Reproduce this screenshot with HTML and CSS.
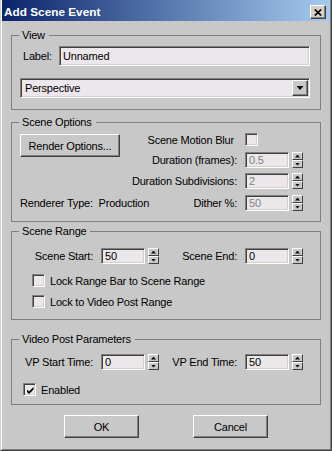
FILE: index.html
```html
<!DOCTYPE html>
<html lang="en">
<head>
  <meta charset="UTF-8">
  <meta name="viewport" content="width=device-width, initial-scale=1.0">
  <title>Add Scene Event</title>
  <link rel="stylesheet" href="styles.css">
</head>
<body>
  <div class="dialog">
    <div class="frame">
      <div class="titlebar">
        <span class="title">Add Scene Event</span>
        <span class="close">
          <svg width="8" height="7" viewBox="0 0 8 7"><path d="M0.8 0.5 L7.2 6.5 M7.2 0.5 L0.8 6.5" stroke="#000" stroke-width="1.7" fill="none"/></svg>
        </span>
      </div>

      <div class="content">
        <div class="group view">
          <span class="legend">View</span>
          <div class="label-row">
            <span>Label:</span>
            <div class="field wide">Unnamed</div>
          </div>
          <div class="field select">
            <span>Perspective</span>
            <span class="drop"></span>
          </div>
        </div>

        <div class="group options">
          <span class="legend">Scene Options</span>
          <div class="opts-left">
            <div class="btn render">Render Options...</div>
            <div class="renderer">Renderer Type:&nbsp; Production</div>
          </div>
          <div class="opts-right">
            <div class="frow first">
              <span class="flabel cb-label">Scene Motion Blur</span>
              <span class="check"></span>
              <span class="pad"></span>
            </div>
            <div class="frow">
              <span class="flabel">Duration (frames):</span>
              <div class="field num off">0.5</div>
              <span class="spin"><span class="up"></span><span class="dn"></span></span>
            </div>
            <div class="frow">
              <span class="flabel">Duration Subdivisions:</span>
              <div class="field num off">2</div>
              <span class="spin"><span class="up"></span><span class="dn"></span></span>
            </div>
            <div class="frow last">
              <span class="flabel">Dither %:</span>
              <div class="field num off">50</div>
              <span class="spin"><span class="up"></span><span class="dn"></span></span>
            </div>
          </div>
        </div>

        <div class="group range">
          <span class="legend">Scene Range</span>
          <div class="pair-row">
            <span class="plabel">Scene Start:</span>
            <div class="field num">50</div>
            <span class="spin"><span class="up"></span><span class="dn"></span></span>
            <span class="plabel second">Scene End:</span>
            <div class="field num">0</div>
            <span class="spin"><span class="up"></span><span class="dn"></span></span>
          </div>
          <div class="cb-row lock1"><span class="check"></span>Lock Range Bar to Scene Range</div>
          <div class="cb-row lock2"><span class="check"></span>Lock to Video Post Range</div>
        </div>

        <div class="group vp">
          <span class="legend">Video Post Parameters</span>
          <div class="pair-row">
            <span class="plabel">VP Start Time:</span>
            <div class="field num">0</div>
            <span class="spin"><span class="up"></span><span class="dn"></span></span>
            <span class="plabel second">VP End Time:</span>
            <div class="field num">50</div>
            <span class="spin"><span class="up"></span><span class="dn"></span></span>
          </div>
          <div class="cb-row enabled">
            <span class="check">
              <svg width="9" height="9" viewBox="0 0 9 9"><path d="M1 3.5 L3 5.5 L7.5 1 L7.5 3.5 L3 8 L1 6 Z" fill="#000"/></svg>
            </span>Enabled
          </div>
        </div>

        <div class="actions">
          <div class="btn action">OK</div>
          <div class="btn action">Cancel</div>
        </div>
      </div>
    </div>
  </div>
</body>
</html>
```

FILE: styles.css
```css
html, body {
  margin: 0;
  padding: 0;
  background: #c8c8c8;
}
body {
  font-family: "Liberation Sans", Arial, sans-serif;
  font-size: 11px;
  letter-spacing: -0.2px;
  color: #000;
}
.dialog {
  width: 332px;
  height: 451px;
  box-sizing: border-box;
  border: 1px solid;
  border-color: #d4d0c8 #404040 #404040 #d4d0c8;
  border-top: 0;
  background: #c8c8c8;
}
.frame {
  height: 100%;
  box-sizing: border-box;
  border: 1px solid;
  border-color: #fff #808080 #808080 #fff;
  border-top: 0;
}
.titlebar {
  height: 21px;
  display: flex;
  justify-content: space-between;
  align-items: flex-start;
  background: linear-gradient(to right, #0a246a, #a6caf0);
}
.title {
  color: #fff;
  font-weight: bold;
  font-size: 11.8px;
  letter-spacing: 0;
  line-height: 13px;
  margin: 6px 0 0 2px;
}
.close {
  width: 16px;
  height: 14px;
  margin: 5px 4px 0 0;
  box-sizing: border-box;
  display: flex;
  align-items: center;
  justify-content: center;
  background: #d4d0c8;
  border: 1px solid;
  border-color: #fff #404040 #404040 #fff;
  box-shadow: inset -1px -1px #808080;
}
.close svg {
  display: block;
  margin-right: 1px;
}

.content {
  display: flex;
  flex-direction: column;
  padding: 14px 9px 0;
}
.group {
  position: relative;
  border: 1px solid #808080;
}
.legend {
  position: absolute;
  top: -7px;
  left: 7px;
  padding: 0 4px 0 3px;
  line-height: 13px;
  background: #c8c8c8;
}

/* sunken edit fields */
.field {
  box-sizing: border-box;
  border: 1px solid;
  border-color: #808080 #fff #fff #808080;
  box-shadow: inset 1px 1px #404040, inset -1px -1px #d4d0c8;
  background: #ebe7eb;
  padding: 0 3px;
  white-space: nowrap;
}
.field.num {
  width: 44px;
  height: 16px;
  line-height: 14px;
}
.field.off {
  color: #808080;
}
.check {
  width: 13px;
  height: 13px;
  box-sizing: border-box;
  border: 1px solid;
  border-color: #808080 #fff #fff #808080;
  box-shadow: inset 1px 1px #404040, inset -1px -1px #d4d0c8;
  background: #ebe7eb;
  display: flex;
  align-items: center;
  justify-content: center;
  flex-shrink: 0;
}
.check svg {
  display: block;
  margin: 1px 0 0 1px;
}

/* raised buttons */
.btn {
  box-sizing: border-box;
  border: 1px solid;
  border-color: #fff #404040 #404040 #fff;
  box-shadow: inset -1px -1px #808080;
  background: #c8c8c8;
  display: flex;
  align-items: center;
  justify-content: center;
}

.spin {
  display: flex;
  flex-direction: column;
  width: 11px;
  height: 16px;
  margin-left: 3px;
  flex-shrink: 0;
}
.spin span {
  flex: 1;
  box-sizing: border-box;
  border: 1px solid;
  border-color: #fff #404040 #404040 #fff;
  background: #c8c8c8;
  display: flex;
  align-items: center;
  justify-content: center;
}
.spin span::after {
  content: "";
  width: 5px;
  height: 3px;
  background: #000;
}
.spin .up::after {
  clip-path: polygon(50% 0, 100% 100%, 0 100%);
}
.spin .dn::after {
  clip-path: polygon(0 0, 100% 0, 50% 100%);
}

/* View */
.view {
  padding: 10px 10px 11px 8px;
}
.label-row {
  height: 20px;
  display: flex;
  align-items: center;
  justify-content: space-between;
  padding-left: 3px;
}
.field.wide {
  width: 251px;
  height: 20px;
  line-height: 18px;
}
.field.select {
  margin-top: 12px;
  height: 20px;
  padding: 1px;
  display: flex;
  align-items: center;
  justify-content: space-between;
}
.field.select span:first-child {
  padding-left: 3px;
}
.drop {
  width: 16px;
  height: 16px;
  box-sizing: border-box;
  border: 1px solid;
  border-color: #fff #404040 #404040 #fff;
  box-shadow: inset -1px -1px #808080;
  background: #c8c8c8;
  display: flex;
  align-items: center;
  justify-content: center;
}
.drop::after {
  content: "";
  width: 7px;
  height: 4px;
  background: #000;
  clip-path: polygon(0 0, 100% 0, 50% 100%);
}

/* Scene Options */
.options {
  margin-top: 12px;
  padding: 10px 17px 10px 8px;
  display: flex;
  justify-content: space-between;
}
.opts-left {
  width: 100px;
  flex-shrink: 0;
  display: flex;
  flex-direction: column;
  justify-content: space-between;
}
.render {
  width: 100px;
  height: 23px;
  margin-top: 1px;
}
.renderer {
  line-height: 16px;
  white-space: nowrap;
}
.opts-right {
  width: 175px;
  display: flex;
  flex-direction: column;
  gap: 5px;
}
.frow {
  display: flex;
  align-items: center;
}
.frow.first {
  margin-bottom: 1px;
}
.frow.last {
  margin-top: 1px;
}
.flabel {
  flex: 1;
  text-align: right;
  margin-right: 8px;
  white-space: nowrap;
}
.flabel.cb-label {
  margin-right: 11px;
}
.pad {
  width: 45px;
}

/* Scene Range / Video Post */
.range {
  margin-top: 9px;
  padding: 16px 17px 11px 8px;
}
.vp {
  margin-top: 19px;
  padding: 14px 17px 8px 8px;
}
.pair-row {
  display: flex;
  align-items: center;
  height: 16px;
}
.plabel {
  width: 73px;
  margin-right: 8px;
  text-align: right;
  white-space: nowrap;
}
.plabel.second {
  width: 78px;
}
.cb-row {
  display: flex;
  align-items: center;
  gap: 5px;
  height: 13px;
}
.lock1 {
  margin-top: 10px;
  padding-left: 12px;
}
.lock2 {
  margin-top: 8px;
  padding-left: 12px;
}
.enabled {
  margin-top: 13px;
  padding-left: 3px;
}

.actions {
  margin-top: 10px;
  display: flex;
  justify-content: center;
  gap: 54px;
}
.btn.action {
  width: 75px;
  height: 23px;
}
```
